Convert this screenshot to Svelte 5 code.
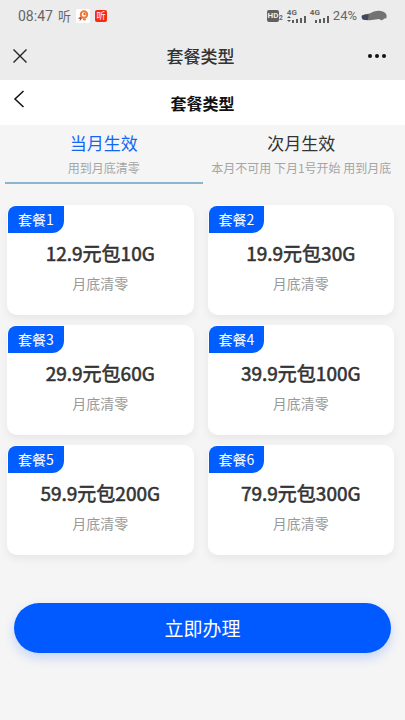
<script>
  const tabs = [
    { id: 'now', title: '当月生效', note: '用到月底清零' },
    { id: 'next', title: '次月生效', note: '本月不可用 下月1号开始 用到月底' }
  ];
  const plans = ['12.9元包10G', '19.9元包30G', '29.9元包60G', '39.9元包100G', '59.9元包200G', '79.9元包300G'];
  let active = $state('now');
  let selected = $state(-1);
</script>

<div class="page">
  <div class="status">
    <div class="left">
      <span class="clock">08:47</span>
      <span class="listen">听</span>
      <svg width="14" height="14" viewBox="0 0 14 14" aria-hidden="true">
        <rect width="14" height="14" rx="2" fill="#fff" />
        <circle cx="8" cy="5.5" r="3.2" fill="none" stroke="#ef7a32" stroke-width="2" />
        <circle cx="8.500" cy="5" r="1.200" fill="#e0602a" />
        <path d="M4.500 7.500 2 9.500 4 10 3.500 12.500 6 9.500Z" fill="#b5503a" />
        <path d="M7 10.500h3" stroke="#ef7a32" stroke-width="1.600" />
      </svg>
      <span class="app">听</span>
    </div>
    <div class="right">
      <span class="hd"><b>HD</b><sub>2</sub></span>
      {#each [1, 2] as sim}
        <span class="signal">
          <span class="net">4G</span>
          <svg width="19" height="8" viewBox="0 0 19 8" aria-hidden="true">
            {#if sim === 1}<path d="M0 3l2-2 2 2zM0 5h4l-2 2z" fill="#555" />{/if}
            <path d="M5 5h2v3H5zM9 4h2v4H9zM13 3h2v5h-2zM17 1h2v7h-2z" fill="#5c5c5c" />
          </svg>
        </span>
      {/each}
      <span class="percent">24%</span>
      <svg class="car" width="26" height="12" viewBox="0 0 27 12" aria-hidden="true">
        <path d="M1 5.500Q4 4 9 3.500 14 0 19 .5 25 1 26.500 5V8Q25 9 24 8.500 22 12 19 9L9 10.500 3 10Q0 9 1 5.500Z" fill="#737373" />
        <path d="M1 5.500Q4 4 8 4.500L7 10.500 3 10Q0 9 1 5.500Z" fill="#41475c" />
      </svg>
    </div>
  </div>

  <header class="bar">
    <button class="icon" aria-label="关闭">
      <svg width="16" height="16" viewBox="0 0 16 16"><path d="M1.500 1.500l13 13M14.500 1.500l-13 13" stroke="#222" stroke-width="1.400" /></svg>
    </button>
    <h1>套餐类型</h1>
    <button class="icon" aria-label="更多">
      <svg width="20" height="6" viewBox="0 0 20 6" fill="#111"><circle cx="3" cy="3" r="2" /><circle cx="10" cy="3" r="2" /><circle cx="17" cy="3" r="2" /></svg>
    </button>
  </header>

  <nav class="nav">
    <button class="icon" aria-label="返回">
      <svg width="12" height="18" viewBox="0 0 12 18"><path d="M10.500 1L2 9l8.500 8" fill="none" stroke="#111" stroke-width="1.500" /></svg>
    </button>
    <h2>套餐类型</h2>
    <span></span>
  </nav>

  <main>
    <div class="tabs" role="tablist">
      {#each tabs as tab (tab.id)}
        <button role="tab" class:active={active === tab.id} aria-selected={active === tab.id} onclick={() => (active = tab.id)}>
          <span class="title">{tab.title}</span>
          <span class="note">{tab.note}</span>
        </button>
      {/each}
    </div>

    <div class="plans">
      {#each plans as plan, i}
        <button class="plan" aria-pressed={selected === i} onclick={() => (selected = i)}>
          <span class="tag">套餐{i + 1}</span>
          <span class="price">{plan}</span>
          <span class="hint">月底清零</span>
        </button>
      {/each}
    </div>

    <button class="submit">立即办理</button>
  </main>
</div>

<style>
  :global(body) {
    margin: 0;
    background: #f5f5f5;
  }
  .page {
    min-height: 100vh;
    background: #f5f5f5;
    color: #333;
    font-family: "Noto Sans CJK SC", sans-serif;
  }
  button {
    margin: 0;
    padding: 0;
    border: 0;
    background: none;
    color: inherit;
    font: inherit;
    cursor: pointer;
  }
  h1, h2 {
    margin: 0;
    text-align: center;
  }
  svg {
    display: block;
  }
  .status {
    display: flex;
    justify-content: space-between;
    align-items: center;
    height: 32px;
    padding: 0 18px;
    background: #ececec;
    color: #666;
  }
  .left, .right {
    display: flex;
    align-items: center;
  }
  .left {
    gap: 5px;
  }
  .right {
    gap: 4px;
  }
  .clock {
    font: 14px/20px Roboto, sans-serif;
  }
  .listen {
    font-size: 13px;
    line-height: 20px;
  }
  .app {
    width: 12px;
    border-radius: 2px;
    background: #f62b10;
    color: #fff;
    font-size: 9px;
    line-height: 12px;
    text-align: center;
  }
  .hd {
    display: flex;
    align-items: flex-end;
    font: 8px/12px Roboto, sans-serif;
  }
  .hd b {
    width: 12px;
    border-radius: 2px;
    background: #606060;
    color: #eee;
    text-align: center;
  }
  .hd sub {
    font-weight: 700;
    line-height: 8px;
  }
  .signal {
    display: flex;
    flex-direction: column;
  }
  .net {
    height: 5px;
    font: 700 8px/6px Roboto, sans-serif;
  }
  .percent {
    font: 13px/20px Roboto, sans-serif;
  }
  .bar, .nav {
    display: grid;
    grid-template-columns: 32px 1fr 32px;
    align-items: center;
  }
  .bar {
    height: 48px;
    padding: 0 12px;
    background: #ececec;
  }
  .nav {
    height: 45px;
    padding: 0 11px;
    background: #fff;
    color: #111;
  }
  .icon {
    display: grid;
    place-items: center;
    width: 32px;
    height: 32px;
  }
  .bar .icon:first-child, .nav .icon {
    width: 16px;
  }
  .nav .icon {
    height: 38px;
    align-self: start;
  }
  h1 {
    padding-right: 4px;
    font-size: 17px;
    font-weight: 500;
    line-height: 24px;
  }
  h2 {
    font-size: 16px;
    font-weight: 700;
    line-height: 24px;
  }
  .tabs {
    display: grid;
    grid-template-columns: 1fr 1fr;
    padding: 0 5px;
  }
  .tabs button {
    display: flex;
    flex-direction: column;
    align-items: center;
    padding: 5px 0 4px;
    border-bottom: 2px solid transparent;
    white-space: nowrap;
  }
  .tabs .active {
    border-color: #8cb4cc;
  }
  .active .title {
    color: #1266f5;
  }
  .title {
    font-size: 17px;
    line-height: 26px;
  }
  .note {
    padding-top: 1px;
    color: #a5a5a5;
    font-size: 12px;
    line-height: 21px;
  }
  .plans {
    display: grid;
    grid-template-columns: 1fr 1fr;
    gap: 10px 14px;
    padding: 21px 11px 0 7px;
  }
  .plan {
    display: flex;
    flex-direction: column;
    align-items: center;
    padding: 1px 1px 20px;
    border-radius: 10px;
    background: #fff;
    box-shadow: 0 4px 10px rgba(0, 0, 0, 0.06);
  }
  .tag {
    align-self: flex-start;
    padding: 0 10px;
    border-radius: 8px 0 12px 0;
    background: #005dff;
    color: #fff;
    font-size: 14px;
    line-height: 27px;
  }
  .price {
    padding-top: 6px;
    font-size: 19px;
    line-height: 28px;
    -webkit-text-stroke: 0.03em currentColor;
  }
  .hint {
    padding-top: 4px;
    color: #999;
    font-size: 14px;
    line-height: 24px;
  }
  .submit {
    display: block;
    width: calc(100% - 28px);
    margin: 48px 14px 0;
    border-radius: 25px;
    background: #005aff;
    box-shadow: 0 5px 12px rgba(0, 90, 255, 0.2);
    color: #fff;
    font-size: 19px;
    line-height: 50px;
  }
</style>
